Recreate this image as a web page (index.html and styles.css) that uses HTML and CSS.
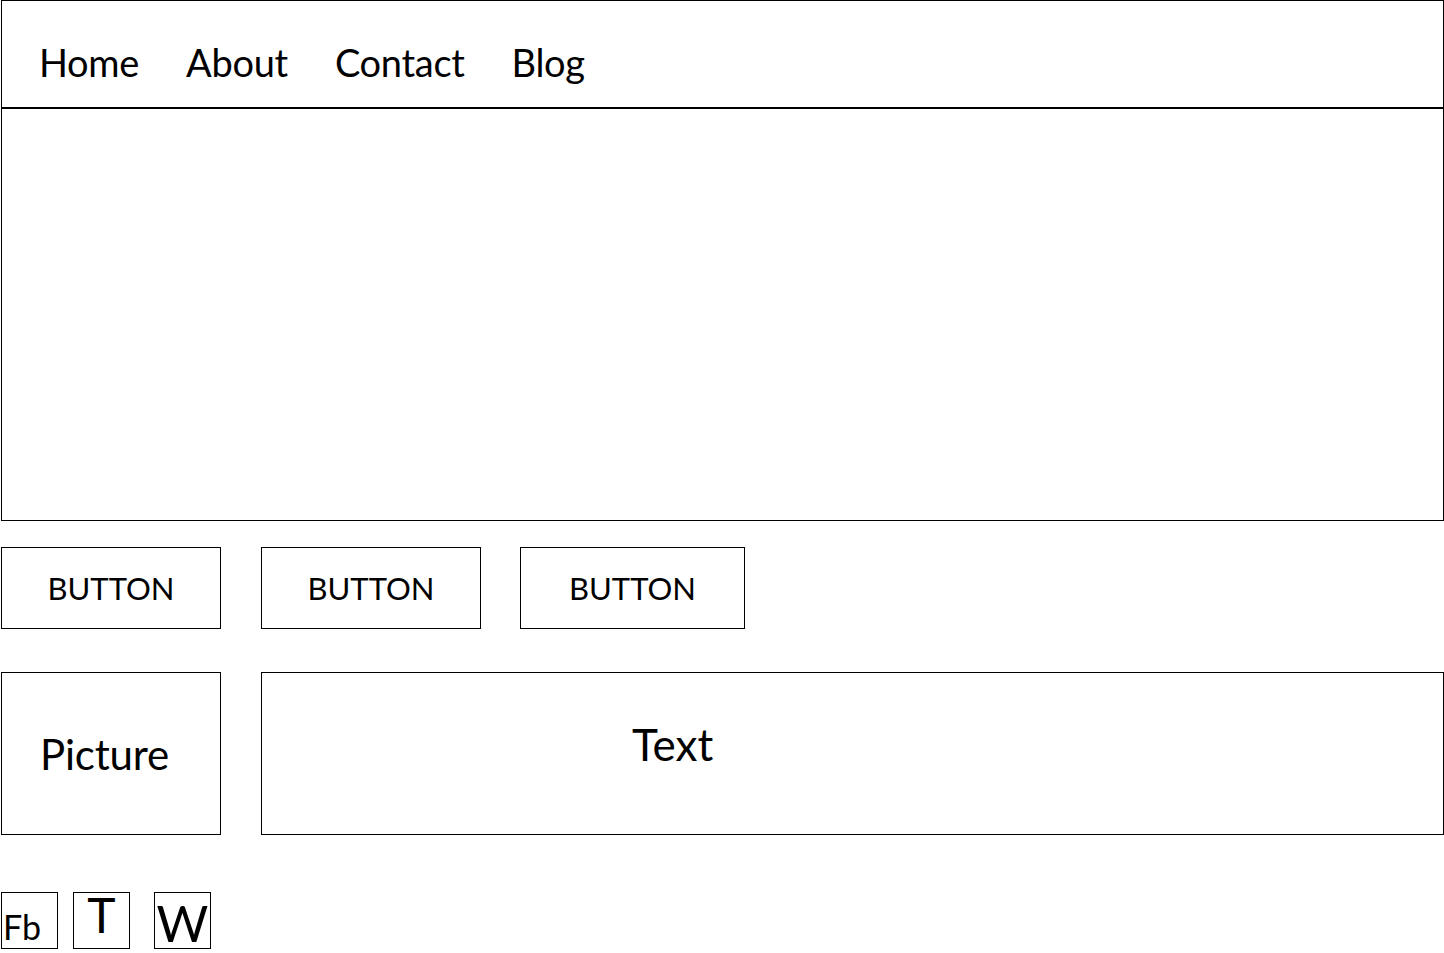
FILE: index.html
```html
<!DOCTYPE html>
<html lang="en">
<head>
<meta charset="utf-8">
<title>Wireframe</title>
<link rel="stylesheet" href="styles.css">
</head>
<body>
<div class="page">
  <header class="nav">
    <a class="nav-link">Home</a>
    <a class="nav-link">About</a>
    <a class="nav-link">Contact</a>
    <a class="nav-link">Blog</a>
  </header>
  <section class="hero"></section>
  <div class="buttons">
    <div class="btn btn-a">BUTTON</div>
    <div class="btn btn-b">BUTTON</div>
    <div class="btn btn-c">BUTTON</div>
  </div>
  <div class="content">
    <div class="picture">Picture</div>
    <div class="text">Text</div>
  </div>
  <div class="social">
    <div class="soc soc-fb">Fb</div>
    <div class="soc soc-t">T</div>
    <div class="soc soc-w">W</div>
  </div>
</div>
</body>
</html>
```
FILE: styles.css
```css
* { box-sizing: border-box; }
html, body { margin: 0; padding: 0; background: #fff; }
body {
  font-family: "Lato", "Liberation Sans", sans-serif;
  color: #000;
}
.page {
  padding-left: 1px;
  width: 1444px;
  display: flex;
  flex-direction: column;
}
.nav {
  height: 108px;
  border: 1px solid #000;
  display: flex;
  align-items: flex-start;
  gap: 47px;
  padding: 37px 0 0 37px;
  font-size: 38px;
  letter-spacing: -0.3px;
  line-height: 48px;
}
.nav-link { color: #000; text-decoration: none; }
.hero {
  height: 413px;
  border: 1px solid #000;
}
.buttons {
  display: flex;
  margin-top: 26px;
  height: 82px;
}
.btn {
  border: 1px solid #000;
  display: flex;
  align-items: center;
  justify-content: center;
  font-size: 31px;
  height: 82px;
}
.btn-a { width: 220px; }
.btn-b { width: 220px; margin-left: 40px; }
.btn-c { width: 225px; margin-left: 39px; }
.content {
  display: flex;
  margin-top: 43px;
  height: 163px;
}
.picture {
  width: 220px;
  border: 1px solid #000;
  display: flex;
  align-items: center;
  padding-left: 38px;
  font-size: 42px;
  letter-spacing: -0.2px;
}
.text {
  flex: 1;
  margin-left: 40px;
  border: 1px solid #000;
  padding: 43px 0 0 370px;
  font-size: 44px;
  line-height: 56px;
}
.social {
  display: flex;
  margin-top: 57px;
}
.soc {
  width: 57px;
  height: 57px;
  border: 1px solid #000;
  overflow: visible;
}
.soc-fb {
  font-size: 34px;
  line-height: 34px;
  padding: 17px 0 0 1px;
}
.soc-t {
  margin-left: 15px;
  font-size: 48px;
  line-height: 40px;
  text-align: center;
  padding-top: 2px;
}
.soc-w {
  margin-left: 24px;
  font-size: 50px;
  line-height: 50px;
  text-align: center;
  padding-top: 5px;
}
```
